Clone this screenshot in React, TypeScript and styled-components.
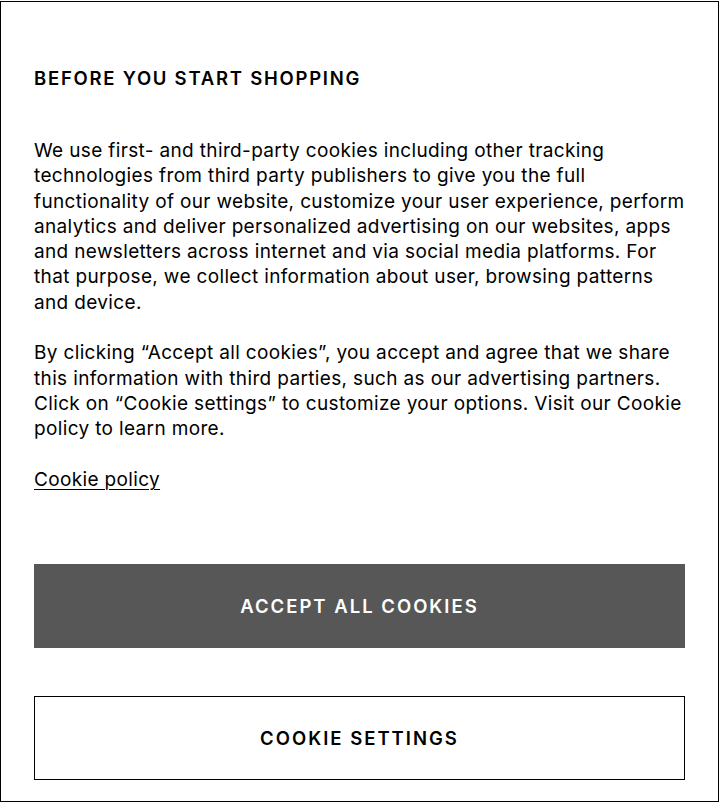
import React from "react";
import styled, { createGlobalStyle } from "styled-components";

const GlobalStyle = createGlobalStyle`
  html, body {
    margin: 0;
    padding: 0;
    background: #ffffff;
  }
  body {
    font-family: Inter, "Noto Sans", Arial, sans-serif;
    color: #000000;
  }
`;

const Page = styled.div`
  padding-top: 1px;
`;

const Dialog = styled.div`
  box-sizing: border-box;
  width: 719px;
  height: 801px;
  border: 1px solid #000000;
  padding: 64px 33px 0 33px;
  display: flex;
  flex-direction: column;
`;

const Title = styled.h2`
  margin: 0;
  font-size: 18.5px;
  line-height: 24px;
  font-weight: 600;
  letter-spacing: 1.75px;
  text-transform: uppercase;
`;

const Body = styled.div`
  margin-top: 48px;
  display: flex;
  flex-direction: column;
  gap: 25.3px;
`;

const Paragraph = styled.p`
  margin: 0;
  font-size: 19px;
  line-height: 25.3px;
  font-weight: 400;
  letter-spacing: 0.35px;
  white-space: nowrap;
`;

const PolicyLink = styled.a`
  font-size: 19px;
  line-height: 25.3px;
  letter-spacing: 0.35px;
  color: #000000;
  text-decoration: underline;
  text-underline-offset: 3px;
  text-decoration-thickness: 1px;
  align-self: flex-start;
`;

const Actions = styled.div`
  margin-top: 72px;
  display: flex;
  flex-direction: column;
  gap: 48px;
`;

const Button = styled.button<{ $primary?: boolean }>`
  box-sizing: border-box;
  height: 84px;
  width: 100%;
  font-family: inherit;
  font-size: 18.5px;
  font-weight: 600;
  letter-spacing: 2px;
  text-transform: uppercase;
  cursor: pointer;
  border: 1px solid ${(p) => (p.$primary ? "#575757" : "#000000")};
  background: ${(p) => (p.$primary ? "#575757" : "#ffffff")};
  color: ${(p) => (p.$primary ? "#ffffff" : "#000000")};
`;

export default function App() {
  return (
    <>
      <GlobalStyle />
      <Page>
        <Dialog>
          <Title>Before you start shopping</Title>
          <Body>
            <Paragraph>
              We use first- and third-party cookies including other tracking
              <br />
              technologies from third party publishers to give you the full
              <br />
              functionality of our website, customize your user experience, perform
              <br />
              analytics and deliver personalized advertising on our websites, apps
              <br />
              and newsletters across internet and via social media platforms. For
              <br />
              that purpose, we collect information about user, browsing patterns
              <br />
              and device.
            </Paragraph>
            <Paragraph>
              By clicking “Accept all cookies”, you accept and agree that we share
              <br />
              this information with third parties, such as our advertising partners.
              <br />
              Click on “Cookie settings” to customize your options. Visit our Cookie
              <br />
              policy to learn more.
            </Paragraph>
            <PolicyLink href="#">Cookie policy</PolicyLink>
          </Body>
          <Actions>
            <Button $primary>Accept all cookies</Button>
            <Button>Cookie settings</Button>
          </Actions>
        </Dialog>
      </Page>
    </>
  );
}
